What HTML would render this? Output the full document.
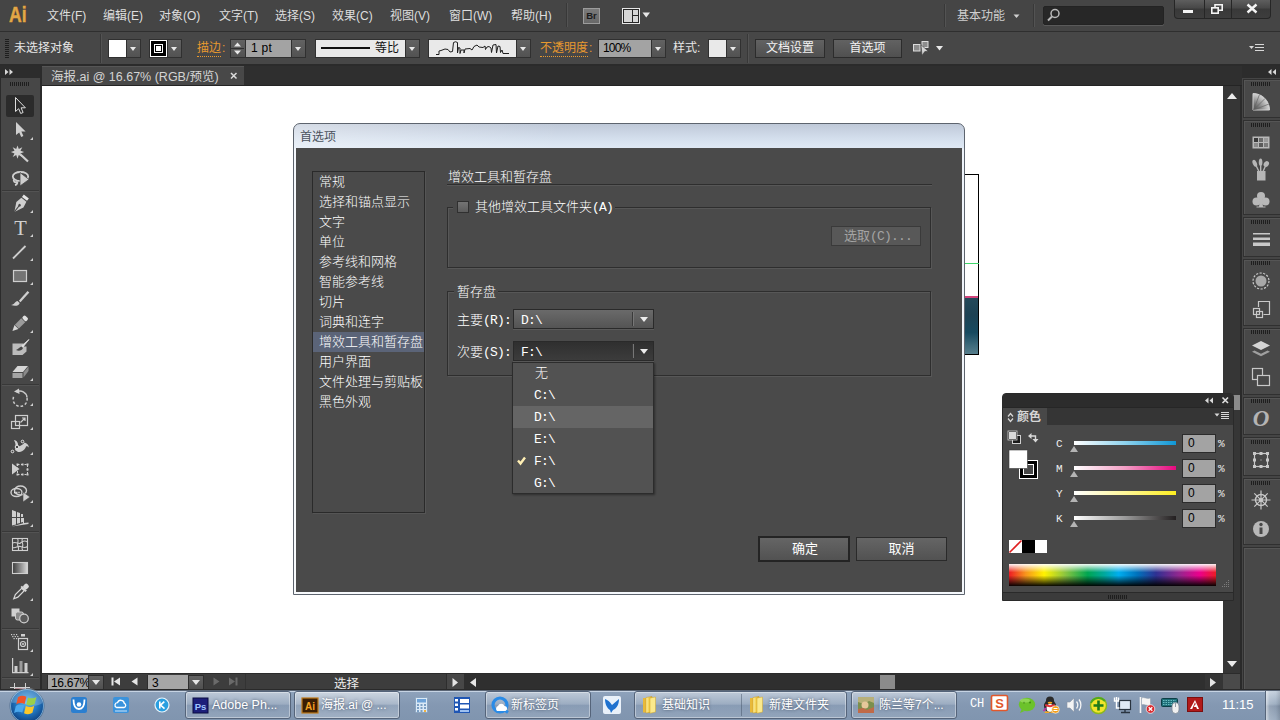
<!DOCTYPE html>
<html lang="zh-CN">
<head>
<meta charset="utf-8">
<title>海报.ai @ 16.67% (RGB/预览)</title>
<style>
*{box-sizing:border-box;margin:0;padding:0}
html,body{width:1280px;height:720px;overflow:hidden;background:#fff}
body{position:relative;font-family:"Liberation Sans","Noto Sans CJK SC",sans-serif;font-size:12px;color:#e4e4e4}
.a{position:absolute}
svg{position:absolute;overflow:visible}
.l{font-family:"Liberation Mono","Noto Sans CJK SC",monospace;font-size:13px;letter-spacing:-0.8px}
/* menubar */
#menubar{left:0;top:0;width:1280px;height:31px;background:#454545}
#menubar .mi{position:absolute;top:8px;font-size:12px;line-height:17px;color:#dedede;white-space:nowrap}
#ailogo{left:8.5px;top:1.5px;font-size:22px;-webkit-text-stroke:.5px #e2a748;font-weight:bold;color:#e2a748;line-height:26px;transform:scaleX(.8);transform-origin:0 0;text-shadow:0 0 1px #3a2a10}
.vsep{position:absolute;width:2px;border-left:1px solid #383838;border-right:1px solid #535353}
/* control bar */
#ctrl{left:0;top:31px;width:1280px;height:35px;background:#474747;border-top:1px solid #2f2f2f;border-bottom:2px solid #2b2b2b}
#ctrl .t{position:absolute;top:9px;font-size:12px;line-height:15px;white-space:nowrap;color:#e6e6e6}
#ctrl .or{color:#e8992f;border-bottom:1px dotted #e8992f}
.dd{position:absolute;top:7px;height:19px;width:15px;background:linear-gradient(#626262,#525252);border:1px solid #303030}
.dd:after{content:"";position:absolute;left:3px;top:7px;border:3.5px solid transparent;border-top:4px solid #e8e8e8;border-bottom:0}
.inp{position:absolute;top:7px;height:19px;background:#a3a3a3;border:1px solid #303030;color:#000;font-size:12px;line-height:16px;padding-left:4px;white-space:nowrap;overflow:hidden}
.btn{position:absolute;top:7px;height:19px;background:linear-gradient(#626262,#505050);border:1px solid #2c2c2c;color:#f2f2f2;font-size:12px;line-height:17px;text-align:center}
/* tabs */
#tabbar{left:41px;top:66px;width:1201px;height:20px;background:#2f2f2f;border-bottom:1px solid #242424}
#tab{left:42px;top:66px;width:202px;height:19px;box-shadow:inset 0 1px 0 #565656;background:#484848;color:#d4d4d4;font-size:12.5px;line-height:23px;padding-left:9px;overflow:hidden;white-space:nowrap}
/* left tools */
#tools{left:0;top:66px;width:42px;height:624px;background:#474747;border-left:1px solid #2b2b2b;border-right:2px solid #2b2b2b}
#toolhead{left:0;top:66px;width:40px;height:12px;background:#2c2c2c}
.tsep{position:absolute;left:2px;width:37px;height:2px;border-top:1px solid #383838;border-bottom:1px solid #535353}
.corner{position:absolute;width:0;height:0;border:2px solid transparent;border-right-color:#d0d0d0;border-bottom-color:#d0d0d0}
/* canvas */
#canvas{left:42px;top:86px;width:1181px;height:587px;background:#fff}
#vscroll{left:1223px;top:86px;width:19px;height:587px;background:#363636;border-right:2px solid #2a2a2a}
#dock{left:1242px;top:66px;width:38px;height:624px;background:#454545}
#dockhead{left:1242px;top:66px;width:38px;height:12px;background:#2c2c2c}
.dg{position:absolute;left:1243px;width:37px;background:#484848;border:1px solid #303030;border-right:0;box-shadow:inset 1px 1px 0 #555}
.grip{position:absolute;height:4px;background:repeating-linear-gradient(90deg,#1e1e1e 0,#1e1e1e 1px,transparent 1px,transparent 2px)}
/* status */
#status{left:42px;top:673px;width:1200px;height:17px;background:#3d3d3d;border-top:1px solid #2b2b2b;border-bottom:1px solid #2b2b2b}
/* taskbar */
#taskbar{left:0;top:690px;width:1280px;height:30px;background:linear-gradient(#5b6676 0,#5b6676 1px,#c6d3e3 1px,#c6d3e3 2px,#8ea2bb 2px,#8498b2 50%,#8095af 100%)}
.tb{position:absolute;top:691px;height:28px;border:1px solid #55647a;border-radius:3px;background:linear-gradient(rgba(255,255,255,.42),rgba(255,255,255,.2) 46%,rgba(255,255,255,.04) 52%,rgba(255,255,255,.14));box-shadow:inset 0 0 0 1px rgba(255,255,255,.38)}
.tt{position:absolute;top:697px;font-size:12px;line-height:16px;color:#fff;white-space:nowrap;text-shadow:0 0 3px rgba(30,40,60,.7)}
/* dialog */
#dlg{left:293px;top:123px;width:672px;height:472px;border:1px solid #5d646e;border-radius:7px 7px 0 0;background:linear-gradient(90deg,rgba(255,255,255,.35),rgba(255,255,255,0) 40%),linear-gradient(#bfc9d8 0,#d3deec 14px,#dee8f4 24px,#eef3fa 25px,#f4f7fb 100%)}
#dlgtitle{left:300px;top:129px;font-size:12px;line-height:16px;color:#4a525c}
#dlgbody{left:296px;top:148px;width:666px;height:444px;background:#4a4a4a}
.d{position:absolute;font-size:13px;line-height:16px;color:#fff;white-space:nowrap;font-family:"Liberation Mono","Noto Sans CJK SC",monospace;font-weight:300}
.gb{position:absolute;border:1px solid #2e2e2e;box-shadow:1px 1px 0 #575757,inset 1px 1px 0 #575757}
.cut{position:absolute;background:#4a4a4a;height:4px}
.sel{position:absolute;height:20px;border:1px solid #2a2a2a;box-shadow:0 1px 0 #5a5a5a}
.sel i{position:absolute;right:19px;top:2px;width:2px;height:14px;border-left:1px solid #3a3a3a;border-right:1px solid #777}
.sel:after{content:"";position:absolute;right:5px;top:7px;border:4px solid transparent;border-top:5px solid #ececec;border-bottom:0}
.dbtn{position:absolute;background:linear-gradient(#656565,#525252);color:#fff;font-size:13px;text-align:center;font-family:"Liberation Mono","Noto Sans CJK SC",monospace}
/* colour panel */
#cp{left:1002px;top:393px;width:232px;height:208px;background:#484848;border:1px solid #2a2a2a;border-radius:4px 4px 0 0}
.cin{position:absolute;left:1182px;width:34px;height:19px;background:#a3a3a3;border:1px solid #2c2c2c;color:#000;font-family:"Liberation Sans",sans-serif;font-size:12px;line-height:16px;padding-left:5px}
.clab{position:absolute;left:1056px;font-size:11px;line-height:12px;color:#eee;font-family:"Liberation Mono",monospace}
.pct{position:absolute;left:1218px;font-size:11px;line-height:12px;color:#eee;font-family:"Liberation Mono",monospace}
.bar{position:absolute;left:1074px;width:102px;height:4px}
.thumb{position:absolute;left:1070px;width:0;height:0;border:4px solid transparent;border-bottom:6px solid #b4b4b4;border-top:0}
</style>
</head>
<body>
<!-- MENUBAR -->
<div id="menubar" class="a">
  <div id="ailogo" class="a">Ai</div>
  <div class="mi" style="left:47px">文件(F)</div>
  <div class="mi" style="left:103px">编辑(E)</div>
  <div class="mi" style="left:159px">对象(O)</div>
  <div class="mi" style="left:219px">文字(T)</div>
  <div class="mi" style="left:275px">选择(S)</div>
  <div class="mi" style="left:332px">效果(C)</div>
  <div class="mi" style="left:390px">视图(V)</div>
  <div class="mi" style="left:449px">窗口(W)</div>
  <div class="mi" style="left:511px">帮助(H)</div>
  <div class="vsep" style="left:566px;top:3px;height:24px"></div>
  <!-- Br button -->
  <div class="a" style="left:583px;top:8px;width:17px;height:16px;border:1px solid #9c9c9c;background:linear-gradient(#7a7a7a,#686868);color:#1c1c1c;font-size:9.5px;font-weight:bold;line-height:14px;text-align:center">Br</div>
  <!-- arrange icon -->
  <svg style="left:622px;top:8px" width="30" height="16" viewBox="0 0 30 16"><rect x="0.5" y="0.5" width="17" height="15" fill="#262626" stroke="#e6e6e6"/><rect x="2" y="2" width="8" height="12" fill="#d6d6d6"/><rect x="11" y="2" width="5" height="5" fill="#d6d6d6"/><rect x="11" y="8" width="5" height="6" fill="#d6d6d6"/><path d="M20.500 4.500h7.500l-3.750 5z" fill="#e6e6e6"/></svg>
  <div class="vsep" style="left:944px;top:4px;height:23px"></div>
  <div class="mi" style="left:957px;color:#cfcfcf">基本功能</div>
  <svg style="left:1013px;top:14px" width="8" height="5"><path d="M0.5 0.5h6l-3 3.5z" fill="#cfcfcf"/></svg>
  <div class="vsep" style="left:1033px;top:4px;height:23px"></div>
  <!-- search -->
  <div class="a" style="left:1043px;top:6px;width:121px;height:19px;background:#272727;border:1px solid #232323;border-radius:2px;box-shadow:0 1px 0 #5a5a5a"></div>
  <svg style="left:1047px;top:8px" width="14" height="14" viewBox="0 0 14 14"><circle cx="8" cy="5.5" r="4" fill="none" stroke="#b9b9b9" stroke-width="1.5"/><path d="M5 8.5L1 12.5" stroke="#b9b9b9" stroke-width="2"/></svg>
  <!-- window controls -->
  <div class="a" style="left:1174px;top:0;width:97px;height:19px;border:1px solid #262626;border-top:0;border-radius:0 0 4px 4px;background:linear-gradient(#5e5e5e,#474747 45%,#393939 50%,#3d3d3d)"></div>
  <div class="a" style="left:1204px;top:0;width:1px;height:18px;background:#262626"></div>
  <div class="a" style="left:1231px;top:0;width:1px;height:18px;background:#262626"></div>
  <svg style="left:1174px;top:0" width="95" height="19" viewBox="0 0 95 19"><rect x="9" y="10" width="10" height="3" fill="#f4f4f4"/><g fill="none" stroke="#f4f4f4" stroke-width="1.6"><rect x="37.8" y="7.8" width="6.4" height="5.4"/><path d="M41 7V4.8h7.2v5.4H45"/></g><path d="M73.5 4.5l9 8M82.5 4.5l-9 8" stroke="#f4f4f4" stroke-width="2.4"/></svg>
</div>
<!-- CONTROL BAR -->
<div id="ctrl" class="a">
  <div class="grip a" style="left:5px;top:7px;width:4px;height:20px;background:repeating-linear-gradient(180deg,#1e1e1e 0,#1e1e1e 1px,transparent 1px,transparent 2px)"></div>
  <div class="t" style="left:14px">未选择对象</div>
  <div class="vsep" style="left:100px;top:2px;height:29px"></div>
  <div class="a" style="left:108px;top:7px;width:19px;height:19px;background:#fff;border:1px solid #303030"></div>
  <div class="dd" style="left:126px"></div>
  <div class="a" style="left:149px;top:7px;width:19px;height:19px;background:#000;border:1px solid #303030;box-shadow:inset 0 0 0 1px #fff"></div>
  <div class="a" style="left:154px;top:12px;width:9px;height:9px;background:#fff;border:1px solid #fff;box-shadow:inset 0 0 0 1px #000"></div>
  <div class="dd" style="left:167px"></div>
  <div class="t or" style="left:197px">描边</div><div class="t" style="left:222px;color:#e8992f">:</div>
  <!-- spinner -->
  <div class="a" style="left:230px;top:7px;width:16px;height:19px;background:linear-gradient(#626262,#525252);border:1px solid #303030"></div>
  <svg style="left:230px;top:7px" width="16" height="19"><path d="M4 7.5h7l-3.5-4zM4 11.5h7l-3.5 4z" fill="#e8e8e8"/><path d="M1 9.5h13" stroke="#303030"/></svg>
  <div class="inp" style="left:245px;width:47px;font-family:'Liberation Sans',sans-serif;font-size:12px;letter-spacing:0.3px;padding-left:5px">1 pt</div>
  <div class="dd" style="left:291px"></div>
  <div class="a" style="left:315px;top:7px;width:91px;height:19px;background:#e9e9e9;border:1px solid #303030"></div>
  <div class="a" style="left:321px;top:15px;width:49px;height:2px;background:#111"></div>
  <div class="a" style="left:375px;top:8px;font-size:12px;line-height:16px;color:#111">等比</div>
  <div class="dd" style="left:405px"></div>
  <div class="a" style="left:428px;top:7px;width:89px;height:19px;background:#e9e9e9;border:1px solid #303030"></div>
  <svg style="left:429px;top:7px" width="88" height="19" viewBox="0 0 88 19"><path d="M7 15.500h3v-3.500l2-.500 4-1.500 3 .500 2 2.500 2.500-.500 1-9q2-1.500 4 0v10.500l1-5.500 1.500.500v5.500l1-3.500h3v3l1-4 5-.500 2 1.500 2-3.500 3-1.500 2 2 4 .500 2-1.500.500 3.500 1.500-2.500 2-.500 2 1.500.500 4.500 1.500-7.500 3-.500.500 8.500 1.500-7 2 .500.500 6 1.500-2.500 1 3.500h6" fill="none" stroke="#1e1e1e" stroke-width="1"/></svg>
  <div class="dd" style="left:516px"></div>
  <div class="t or" style="left:540px">不透明度</div><div class="t" style="left:589px;color:#e8992f">:</div>
  <div class="inp" style="left:598px;width:54px;font-family:'Liberation Sans',sans-serif;font-size:12px;letter-spacing:-0.8px">100%</div>
  <div class="dd" style="left:651px"></div>
  <div class="t" style="left:673px">样式:</div>
  <div class="a" style="left:708px;top:7px;width:19px;height:19px;background:#e9e9e9;border:1px solid #303030"></div>
  <div class="dd" style="left:726px"></div>
  <div class="vsep" style="left:747px;top:2px;height:29px"></div>
  <div class="btn" style="left:755px;width:70px">文档设置</div>
  <div class="btn" style="left:833px;width:69px">首选项</div>
  <svg style="left:912px;top:8px" width="32" height="17" viewBox="0 0 32 17"><rect x="1.500" y="4.500" width="6.500" height="6.500" fill="#8c8c8c" stroke="#dcdcdc"/><rect x="10" y="1.500" width="6" height="6" fill="#8c8c8c" stroke="#dcdcdc"/><path d="M9 4.800l7.200 6.400-3.400.4-2.800 3.800z" fill="#d4d4d4" stroke="#3a3a3a" stroke-width=".6"/><path d="M24 6h7l-3.500 4.500z" fill="#e8e8e8"/></svg>
  <svg style="left:1249px;top:11px" width="16" height="11" viewBox="0 0 16 11"><path d="M0 3h5l-2.5 3z" fill="#d8d8d8"/><path d="M6 1.5h9M6 4.5h9M6 7.5h9" stroke="#d8d8d8"/></svg>
</div>
<!-- TABS -->
<div id="tabbar" class="a"></div>
<div id="tab" class="a">海报.ai @ 16.67% (RGB/预览)</div>
<svg style="left:230px;top:72px" width="8" height="8"><path d="M1 1l5.5 5.5M6.5 1L1 6.5" stroke="#dcdcdc" stroke-width="1.5"/></svg>
<!-- TOOLS -->
<div id="tools" class="a"></div>
<div id="toolhead" class="a"></div>
<svg style="left:5px;top:69px" width="9" height="6"><path d="M0 0l3.500 3L0 6zM4.500 0L8 3 4.500 6z" fill="#d8d8d8"/></svg>
<div class="grip" style="left:10px;top:82px;width:20px"></div>
<div class="a" style="left:6px;top:95px;width:28px;height:22px;background:#2b2b2b;border-radius:2px"></div>
<div class="tsep" style="top:190px"></div>
<div class="tsep" style="top:384px"></div>
<div class="tsep" style="top:531px"></div>
<div class="tsep" style="top:628px"></div>
<div class="tsep" style="top:677px"></div>
<svg style="left:0;top:66px" width="41" height="624" viewBox="0 66 41 624">
<g fill="#cfcfcf" stroke="none">
<!-- corner marks -->
<path d="M33 137v3h-3zM33 210v3h-3zM33 234v3h-3zM33 258v3h-3zM33 282v3h-3zM33 330v3h-3zM33 378v3h-3zM33 403v3h-3zM33 427v3h-3zM33 452v3h-3zM33 500v3h-3zM33 524v3h-3zM33 598v3h-3zM33 649v3h-3zM33 673v3h-3z"/>
</g>
<!-- 1 selection (outlined arrow) -->
<path d="M15.500 97.500v14l3.200-2.800 2 4.800 2.400-1-2-4.700h4.300z" fill="#2b2b2b" stroke="#dedede" stroke-width="1" stroke-linejoin="round"/>
<!-- 2 direct selection -->
<path d="M16 122v13l3.200-2.600 2 4.600 2.200-1-2-4.500h4.200z" fill="#cfcfcf"/>
<!-- 3 magic wand -->
<path d="M17.500 145.500l1.300 3.600 3.500-1.800-1.800 3.500 3.600 1.300-3.600 1.300 1.800 3.500-3.500-1.800-1.300 3.600-1.300-3.600-3.500 1.800 1.800-3.500-3.600-1.300 3.600-1.300-1.800-3.500 3.500 1.800z" fill="#cfcfcf"/><path d="M20.500 154.500l7.500 7" stroke="#cfcfcf" stroke-width="2.200"/>
<!-- 4 lasso -->
<g fill="none" stroke="#cfcfcf" stroke-width="1.800"><ellipse cx="20.500" cy="176.500" rx="7.700" ry="4.500"/><path d="M14 179.500c-1 2 1 3 2.500 2.500s1 2.500-1.500 3"/></g><path d="M20 172.500v13.500l9-6.500z" fill="#cfcfcf" stroke="#474747" stroke-width=".8"/>
<!-- 5 pen -->
<g transform="translate(20.500 204) rotate(38)"><path d="M-3.200-9.500h6.400v3h-6.400z" fill="#e4e4e4"/><path d="M-3.200-5.500h6.400l1.300 6.500-4.500 9-4.500-9z" fill="#cfcfcf"/><path d="M0 10V2" stroke="#474747" stroke-width="1"/><circle cx="0" cy="1.500" r="1.300" fill="#474747"/></g>
<!-- 6 type -->
<text x="20.500" y="234.500" font-family="Liberation Serif,serif" font-size="20.500" text-anchor="middle" fill="#cfcfcf">T</text>
<!-- 7 line -->
<path d="M13 258.500l12.500-12.500" stroke="#cfcfcf" stroke-width="1.800"/>
<!-- 8 rect -->
<rect x="13.500" y="270.500" width="13" height="11" fill="#747474" stroke="#cfcfcf" stroke-width="1.200"/>
<!-- 9 brush -->
<path d="M27.500 291l1.800 1.600-8.800 9.600-1.600-1.500z" fill="#cfcfcf"/><path d="M11 305c3.500-.5 4-3.500 6.500-4l2.200 2c-.8 3-5 3.500-8.700 2z" fill="#cfcfcf"/>
<!-- 10 pencil -->
<g transform="translate(19.500 324) rotate(45)"><rect x="-2.800" y="-10" width="5.600" height="4" rx="1.500" fill="#e0e0e0"/><rect x="-2.800" y="-5.300" width="5.600" height="9" fill="#9a9a9a"/><path d="M-2.800 4.300h5.600L0 10z" fill="#d8d8d8"/></g>
<!-- 11 blob brush -->
<path d="M12.500 343.500h11v3l3 0v5l-4 3.500h-10z" fill="#bcbcbc"/><path d="M16 350c2-.5 3.500-3 5.500-3.500l1.500 1.500c-1 2.500-4 3.500-7 2z" fill="#474747"/><path d="M29 339.500l-6 7.500-1.300-1.200z" fill="#e0e0e0" stroke="#e0e0e0" stroke-width=".8"/>
<!-- 12 eraser -->
<path d="M17.500 366h10.500l-5 6h-10.500z" fill="#d6d6d6"/><path d="M12.500 373h10v5h-10z" fill="#a4a4a4"/><path d="M23.500 372.500l5-6v4.500l-5 6.500z" fill="#8a8a8a"/>
<!-- 13 rotate -->
<g fill="none" stroke="#c8c8c8" stroke-width="1.500"><path d="M16.500 392a7 7 0 0 1 10.500 5.500"/><path d="M27 398a7 7 0 1 1-13-2" stroke-dasharray="2.600 2"/></g><path d="M19 388.500l-5 3 5.500 2.500z" fill="#cfcfcf"/>
<!-- 14 scale -->
<g fill="none" stroke="#cfcfcf" stroke-width="1.200"><rect x="11.500" y="421.500" width="8" height="7"/><rect x="15.500" y="415.500" width="12" height="10"/><path d="M20.500 422.500l4.500-4.500M22 418h3v3"/></g>
<!-- 15 warp/width -->
<g fill="#cfcfcf"><path d="M14 440c3 .5 4.500 3 4 6.500 3-.5 5-2 6.500-4 2.500.5 4 2.500 4.500 5-1-1-2-1.500-3-1-1 3.500-4 5.500-8 5.500l-3-2c1-3 1-6-1-10z"/></g><g fill="#474747" stroke="#e8e8e8" stroke-width="1"><circle cx="17" cy="447" r="1.800"/><circle cx="12.500" cy="451.500" r="1.300"/><circle cx="22.500" cy="441.500" r="1.300"/></g>
<!-- 16 free transform -->
<path d="M12 463.500v11l7.500-5.500z" fill="#cfcfcf"/><g fill="none" stroke="#cfcfcf" stroke-width="1" stroke-dasharray="2 1.500"><rect x="17.500" y="464.500" width="10" height="10"/></g><g fill="#cfcfcf"><rect x="16.500" y="463.500" width="2" height="2"/><rect x="26.500" y="463.500" width="2" height="2"/><rect x="26.500" y="473.500" width="2" height="2"/><rect x="16.500" y="473.500" width="2" height="2"/><rect x="21.500" y="463.500" width="2" height="2"/><rect x="21.500" y="473.500" width="2" height="2"/><rect x="26.500" y="468.500" width="2" height="2"/></g>
<!-- 17 shape builder -->
<g fill="none" stroke="#cfcfcf" stroke-width="1.400"><ellipse cx="16.500" cy="492.500" rx="5.500" ry="4"/><ellipse cx="20.500" cy="490.500" rx="6" ry="4.500"/></g><path d="M14 492.500h6" stroke="#e8e8e8" stroke-width="1.400" stroke-dasharray="1.200 1"/><path d="M23 492v10l7-5z" fill="#cfcfcf" stroke="#474747" stroke-width=".6"/>
<!-- 18 perspective grid -->
<g fill="#cfcfcf"><path d="M12 510l4 1.500v5.500h-4zM12 518h4v6.500l-4 1zM17 512l3 1v4h-3zM17 518h3v5l-3 .7zM21 514h2v3h-2zM21 518h2v4l-2 .5z"/><path d="M12 526.500l16.500-2.500v-1.500l-4.500.5v-5h-1v5.200z" /></g>
<!-- 19 mesh -->
<g fill="none" stroke="#cfcfcf" stroke-width="1.100"><rect x="12.500" y="538.500" width="15" height="12"/><path d="M12.500 543c4-2 6 2 8 0s4-3 7-1M12.500 547.500c3 1.500 5-2 8-1s5 2 7 0M17.500 538.500c2 3-1 5 .5 7.500s0 3 .5 4.500M22.500 538.500c-2 3 1.500 5 0 8s.5 3 0 4"/></g>
<!-- 20 gradient -->
<defs><linearGradient id="tg" x1="0" x2="1"><stop offset="0" stop-color="#3a3a3a"/><stop offset="1" stop-color="#d8d8d8"/></linearGradient></defs>
<rect x="12.500" y="562.500" width="15" height="11" fill="url(#tg)" stroke="#cfcfcf" stroke-width="1.100"/>
<!-- 21 eyedropper -->
<g transform="translate(20.500 592) rotate(45)"><rect x="-2.500" y="-10.500" width="5" height="5.500" rx="2" fill="#d8d8d8"/><rect x="-3.500" y="-5.500" width="7" height="2" fill="#d8d8d8"/><path d="M-1.800-3.500h3.600v9L0 9.500l-1.800-4z" fill="none" stroke="#d8d8d8" stroke-width="1.200"/></g>
<!-- 22 blend -->
<rect x="11.500" y="608.500" width="8" height="8" fill="#d0d0d0"/><rect x="15.500" y="612" width="8" height="8" rx="2" fill="#8a8a8a" stroke="#d0d0d0" stroke-width="1"/><circle cx="24" cy="618.500" r="4.300" fill="#5a5a5a" stroke="#d0d0d0" stroke-width="1.200"/>
<!-- 23 symbol sprayer -->
<g fill="none" stroke="#cfcfcf" stroke-width="1.200"><rect x="18.500" y="638.500" width="9" height="11"/><circle cx="23" cy="644" r="2.500"/></g><circle cx="23" cy="644" r="1" fill="#cfcfcf"/><rect x="21" y="634" width="4" height="2.500" fill="#cfcfcf"/><g fill="#cfcfcf"><rect x="11" y="634" width="1.200" height="1.200"/><rect x="13.500" y="634" width="1.200" height="1.200"/><rect x="16" y="634" width="1.200" height="1.200"/><rect x="12.200" y="636" width="1.200" height="1.200"/><rect x="14.700" y="636" width="1.200" height="1.200"/><rect x="17.200" y="636" width="1.200" height="1.200"/><rect x="13.500" y="638" width="1.200" height="1.200"/><rect x="16" y="638" width="1.200" height="1.200"/></g>
<!-- 24 graph -->
<g fill="#cfcfcf"><path d="M12 658h1.200v14h15.300v1.200H12z"/><rect x="14.500" y="666" width="3" height="6"/><rect x="19.500" y="661" width="3" height="11" fill="#9c9c9c"/><rect x="24.500" y="663" width="3" height="9"/></g>
<!-- 25 artboard (clipped) -->
<g stroke="#cfcfcf" stroke-width="1" fill="none"><path d="M10 687.500h20M14.500 683v7M25.500 683v7"/></g><rect x="15" y="688" width="10" height="2" fill="#b08890"/>
</svg>
<!-- CANVAS -->
<div id="canvas" class="a"></div>
<!-- artboard behind dialog -->
<div class="a" style="left:900px;top:174px;width:79px;height:181px;border:1px solid #000;background:#fff"></div>
<div class="a" style="left:901px;top:296px;width:77px;height:2px;background:#d2457c"></div>
<div class="a" style="left:901px;top:298px;width:77px;height:56px;background:linear-gradient(#24495a 0,#1d4254 30%,#174a60 62%,#3f6b7c 85%,#567e8c 100%)"></div>
<div class="a" style="left:960px;top:263px;width:19px;height:1px;background:#3fd66a"></div>
<!-- vertical scrollbar -->
<div id="vscroll" class="a"></div>
<svg style="left:1223px;top:86px" width="18" height="587" viewBox="0 0 18 587"><path d="M4 13h10l-5-6z" fill="#ededed"/><path d="M4 575h10l-5 6z" fill="#ededed"/><rect x="3" y="309" width="14" height="15" fill="#8b8b8b"/></svg>
<!-- STATUS BAR -->
<div id="status" class="a"></div>
<div class="a" style="left:47px;top:675px;width:42px;height:15px;background:#a6a6a6;border:1px solid #2e2e2e;border-top:0;color:#000;font-family:'Liberation Sans',sans-serif;font-size:12px;line-height:16px;padding-left:3px;white-space:nowrap;overflow:hidden;letter-spacing:-0.3px">16.67%</div>
<div class="a" style="left:88px;top:675px;width:16px;height:15px;background:linear-gradient(#626262,#505050);border:1px solid #2e2e2e"></div>
<div class="a" style="left:147px;top:675px;width:42px;height:15px;background:#a6a6a6;border:1px solid #2e2e2e;border-top:0;color:#000;font-family:'Liberation Sans',sans-serif;font-size:12px;line-height:16px;padding-left:4px;overflow:hidden">3</div>
<div class="a" style="left:188px;top:675px;width:16px;height:15px;background:linear-gradient(#626262,#505050);border:1px solid #2e2e2e"></div>
<svg style="left:42px;top:674px" width="1200" height="16" viewBox="0 0 1200 16"><g fill="#e6e6e6"><path d="M50 6h8l-4 5zM150 6h8l-4 5z"/><path d="M69.500 3.500h2v8h-2zM78 3.500v8l-6-4zM95.500 3.500v8l-6-4z"/></g><g fill="#6a6a6a"><path d="M171.500 3.500v8l6-4zM187 3.500v8l6-4zM193.500 3.500h2v8h-2z"/></g><path d="M203.500 0v16" stroke="#333"/><rect x="422" y="0" width="759" height="16" fill="#2f2f2f"/><rect x="404" y="0" width="18" height="16" fill="#474747"/><path d="M404.500 0v16" stroke="#2e2e2e"/><path d="M410.500 4v9l5.500-4.500z" fill="#e6e6e6"/><path d="M434 4v9l-6-4.500z" fill="#e6e6e6"/><rect x="838" y="1" width="15" height="14" fill="#8b8b8b"/><rect x="1163" y="0" width="18" height="16" fill="#353535"/><rect x="1181" y="0" width="17" height="16" fill="#4a4a4a"/><path d="M1168 4v9l6-4.500z" fill="#e6e6e6"/></svg>
<div class="a" style="left:334px;top:677px;font-size:12.5px;line-height:15px;color:#eaeaea">选择</div>
<!-- DOCK -->
<div id="dock" class="a"></div>
<div id="dockhead" class="a"></div>
<svg style="left:1268px;top:69px" width="9" height="6"><path d="M3.500 0L0 3l3.500 3zM8 0L4.500 3 8 6z" fill="#d8d8d8"/></svg>
<div class="dg" style="top:79px;height:39px"></div>
<div class="dg" style="top:120px;height:95px"></div>
<div class="dg" style="top:217px;height:40px"></div>
<div class="dg" style="top:259px;height:67px"></div>
<div class="dg" style="top:328px;height:67px"></div>
<div class="dg" style="top:397px;height:38px"></div>
<div class="dg" style="top:437px;height:39px"></div>
<div class="dg" style="top:478px;height:67px"></div>
<div class="dg" style="top:547px;height:143px"></div>
<div class="grip" style="left:1251px;top:82px;width:20px"></div>
<div class="grip" style="left:1251px;top:123px;width:20px"></div>
<div class="grip" style="left:1251px;top:220px;width:20px"></div>
<div class="grip" style="left:1251px;top:261px;width:20px"></div>
<div class="grip" style="left:1251px;top:330px;width:20px"></div>
<div class="grip" style="left:1251px;top:399px;width:20px"></div>
<div class="grip" style="left:1251px;top:440px;width:20px"></div>
<div class="grip" style="left:1251px;top:481px;width:20px"></div>
<svg style="left:1242px;top:66px" width="38" height="624" viewBox="1242 66 38 624">
<defs><radialGradient id="cg" cx="0" cy="1" r="1"><stop offset="0" stop-color="#444"/><stop offset=".5" stop-color="#888"/><stop offset="1" stop-color="#d4d4d4"/></radialGradient></defs>
<!-- colour guide -->
<path d="M1253 93.500c9 0 16.500 7 16.500 16.500h-16.500z" fill="url(#cg)" stroke="#d0d0d0" stroke-width="1"/>
<path d="M1253.500 110l6-15.500M1253.500 110l11.500-11.500M1253.500 110l15.500-6" stroke="#666" stroke-width=".7"/>
<!-- swatches -->
<rect x="1252.500" y="136.500" width="17" height="12" fill="#b8b8b8"/>
<g><rect x="1254" y="138" width="4" height="4" fill="#3a3a3a"/><rect x="1259" y="138" width="4" height="4" fill="#6c6c6c"/><rect x="1264" y="138" width="4" height="4" fill="#9a9a9a"/><rect x="1254" y="143" width="4" height="4" fill="#8a8a8a"/><rect x="1259" y="143" width="4" height="4" fill="#5a5a5a"/><rect x="1264" y="143" width="4" height="4" fill="#7a7a7a"/></g>
<!-- brushes -->
<g fill="#b6b6b6" stroke="none"><rect x="1257" y="171" width="8.500" height="9.500"/><ellipse cx="1254.800" cy="163.300" rx="2" ry="3.600" transform="rotate(-25 1254.800 163.300)"/><ellipse cx="1260.600" cy="162.300" rx="1.800" ry="3.800"/><ellipse cx="1266.300" cy="164" rx="2.400" ry="3.200" transform="rotate(35 1266.300 164)"/></g><g stroke="#b6b6b6" stroke-width="1.400" fill="none"><path d="M1259 171.500l-3-6M1260.700 171.500v-6M1263 171.500l2.500-5.500"/></g>
<!-- symbols (club) -->
<g fill="#b8b8b8"><circle cx="1261" cy="196" r="4"/><circle cx="1256.500" cy="201.500" r="4"/><circle cx="1265.500" cy="201.500" r="4"/><path d="M1260 199h2l1 7.500h2.500v1h-9v-1h2.500z"/></g>
<!-- stroke -->
<g fill="#c8c8c8"><rect x="1253" y="233" width="17" height="1.500"/><rect x="1253" y="237.500" width="17" height="2.500"/><rect x="1253" y="242.500" width="17" height="3.500"/></g>
<!-- gradient -->
<circle cx="1261" cy="281" r="5.500" fill="#a8a8a8"/><circle cx="1261" cy="281" r="8" fill="none" stroke="#c8c8c8" stroke-width="1.200" stroke-dasharray="2.200 1.400"/>
<!-- transparency -->
<g fill="none" stroke="#c8c8c8" stroke-width="1.200"><path d="M1258.500 307v-5.500h11v13h-6"/><rect x="1253.500" y="308.500" width="6" height="6"/><rect x="1256.500" y="311.500" width="6" height="6"/></g>
<!-- layers -->
<path d="M1261 341l9 4.500-9 4.500-9-4.500z" fill="#d4d4d4"/><path d="M1254.500 350.500l-2.500 1.200 9 4.500 9-4.500-2.500-1.200-6.500 3.200z" fill="#a0a0a0"/>
<!-- artboards -->
<g fill="#484848" stroke="#c8c8c8" stroke-width="1.200"><rect x="1252.500" y="368.500" width="10" height="11"/><rect x="1257.500" y="375.500" width="12" height="10"/></g>
<!-- O -->
<text x="1261" y="426" font-family="Liberation Serif,serif" font-style="italic" font-weight="bold" font-size="23" text-anchor="middle" fill="#b4b4b4">O</text>
<!-- transform -->
<g fill="none" stroke="#c8c8c8" stroke-width="1.200"><rect x="1254.500" y="453.500" width="13" height="13"/></g><g fill="#c8c8c8"><rect x="1253" y="452" width="3" height="3"/><rect x="1259.500" y="452" width="3" height="3"/><rect x="1266" y="452" width="3" height="3"/><rect x="1253" y="458.500" width="3" height="3"/><rect x="1266" y="458.500" width="3" height="3"/><rect x="1253" y="465" width="3" height="3"/><rect x="1259.500" y="465" width="3" height="3"/><rect x="1266" y="465" width="3" height="3"/><rect x="1260.500" y="459.500" width="1" height="1"/></g>
<!-- wheel -->
<g fill="none" stroke="#c8c8c8"><circle cx="1261" cy="500" r="5.500" stroke-width="1.400"/><path d="M1261 490.500v19M1251.500 500h19M1254.300 493.300l13.400 13.400M1267.700 493.300l-13.400 13.400" stroke-width="1.200"/></g><circle cx="1261" cy="500" r="2" fill="#c8c8c8"/>
<!-- info -->
<circle cx="1261" cy="529" r="8" fill="#b8b8b8"/><rect x="1259.500" y="527.500" width="3" height="6.500" fill="#484848"/><circle cx="1261" cy="524.500" r="1.700" fill="#484848"/>
</svg>
<!-- DIALOG -->
<div id="dlg" class="a"></div>
<div id="dlgtitle" class="a">首选项</div>
<div id="dlgbody" class="a"></div>
<!-- category list -->
<div class="a" style="left:312px;top:171px;width:113px;height:342px;border:1px solid #2a2a2a;box-shadow:1px 1px 0 #555"></div>
<div class="a" style="left:313px;top:332px;width:111px;height:20px;background:#5b6478"></div>
<div class="d" style="left:319px;top:175px">常规</div>
<div class="d" style="left:319px;top:195px">选择和锚点显示</div>
<div class="d" style="left:319px;top:215px">文字</div>
<div class="d" style="left:319px;top:235px">单位</div>
<div class="d" style="left:319px;top:255px">参考线和网格</div>
<div class="d" style="left:319px;top:275px">智能参考线</div>
<div class="d" style="left:319px;top:295px">切片</div>
<div class="d" style="left:319px;top:315px">词典和连字</div>
<div class="d" style="left:319px;top:335px">增效工具和暂存盘</div>
<div class="d" style="left:319px;top:355px">用户界面</div>
<div class="d" style="left:319px;top:375px">文件处理与剪贴板</div>
<div class="d" style="left:319px;top:395px">黑色外观</div>
<!-- heading -->
<div class="d" style="left:448px;top:170px">增效工具和暂存盘</div>
<div class="a" style="left:447px;top:184px;width:485px;height:2px;border-top:1px solid #2e2e2e;border-bottom:1px solid #575757"></div>
<!-- group 1 -->
<div class="gb" style="left:447px;top:207px;width:484px;height:61px"></div>
<div class="cut" style="left:453px;top:206px;width:162px"></div>
<div class="a" style="left:457px;top:201px;width:12px;height:12px;border:1px solid #303030;background:linear-gradient(#747474,#5c5c5c)"></div>
<div class="d" style="left:475px;top:200px">其他增效工具文件夹<span class="l">(A)</span></div>
<div class="dbtn" style="left:831px;top:226px;width:90px;height:20px;border:1px solid #3a3a3a;background:#585858;color:#a4a4a4;line-height:19px;padding-left:4px">选取<span class="l">(C)...</span></div>
<!-- group 2 -->
<div class="gb" style="left:447px;top:291px;width:484px;height:85px"></div>
<div class="cut" style="left:454px;top:290px;width:44px"></div>
<div class="d" style="left:457px;top:285px">暂存盘</div>
<div class="d" style="left:457px;top:313px">主要<span class="l">(R):</span></div>
<div class="sel" style="left:513px;top:309px;width:141px;background:linear-gradient(#6a6a6a,#545454)"><i></i></div>
<div class="d l" style="left:521px;top:313px">D:\</div>
<div class="d" style="left:457px;top:345px">次要<span class="l">(S):</span></div>
<div class="sel" style="left:513px;top:341px;width:141px;background:linear-gradient(#2f2f2f,#3c3c3c)"><i></i></div>
<div class="d l" style="left:521px;top:345px">F:\</div>
<!-- popup -->
<div class="a" style="left:512px;top:362px;width:142px;height:132px;background:#525252;border:1px solid #2c2c2c;box-shadow:1px 1px 2px rgba(0,0,0,.4)"></div>
<div class="a" style="left:513px;top:406px;width:140px;height:22px;background:#656565"></div>
<div class="d" style="left:535px;top:366px">无</div>
<div class="d l" style="left:534px;top:388px">C:\</div>
<div class="d l" style="left:534px;top:410px">D:\</div>
<div class="d l" style="left:534px;top:432px">E:\</div>
<div class="d l" style="left:534px;top:454px">F:\</div>
<div class="d l" style="left:534px;top:476px">G:\</div>
<svg style="left:517px;top:456px" width="10" height="9"><path d="M1 4.500l2.500 3L8 1.500" fill="none" stroke="#ffefb4" stroke-width="2.4"/></svg>
<!-- buttons -->
<div class="dbtn" style="left:758px;top:536px;width:92px;height:26px;border:2px solid #242424;line-height:23px;padding-left:2px">确定</div>
<div class="dbtn" style="left:856px;top:537px;width:91px;height:24px;border:1px solid #2a2a2a;line-height:23px">取消</div>
<!-- COLOUR PANEL -->
<div id="cp" class="a"></div>
<div class="a" style="left:1003px;top:394px;width:230px;height:13px;background:#2c2c2c;border-radius:3px 3px 0 0"></div>
<div class="a" style="left:1003px;top:407px;width:230px;height:18px;background:#353535;border-top:1px solid #262626"></div>
<div class="a" style="left:1003px;top:408px;width:44px;height:17px;background:#484848"></div>
<svg style="left:1003px;top:394px" width="230" height="207" viewBox="1003 394 230 207">
<path d="M1208.500 397.500v6l-3.500-3zM1213 397.500v6l-3.500-3z" fill="#d8d8d8"/><path d="M1222.500 397.500l5.500 5.500M1228 397.500l-5.500 5.500" stroke="#e0e0e0" stroke-width="1.600"/>
<path d="M1214.500 413.500h5l-2.500 3z" fill="#d8d8d8"/><path d="M1221 412.500h8M1221 414.500h8M1221 416.500h8M1221 418.500h8" stroke="#d8d8d8"/>
<path d="M1008 416.500l2.500-3 2.500 3M1008 418.500l2.500 3 2.500-3" fill="none" stroke="#d8d8d8" stroke-width="1.200"/>
<!-- default fill/stroke + swap -->
<rect x="1012.500" y="435.500" width="8" height="8" fill="#1a1a1a" stroke="#d0d0d0"/><rect x="1008.500" y="431.500" width="8" height="8" fill="#d8d8d8" stroke="#2a2a2a"/><rect x="1008" y="431" width="9" height="9" fill="none" stroke="#d0d0d0" stroke-width=".8"/>
<path d="M1030 436h5.500v5" fill="none" stroke="#d8d8d8" stroke-width="1.400"/><path d="M1028 436l3.500-3v6zM1035.500 442.500l-3-3.500h6z" fill="#d8d8d8"/>
<!-- stroke swatch -->
<rect x="1019.500" y="460.500" width="18" height="18" fill="#000" stroke="#fff"/><rect x="1023.500" y="464.500" width="10" height="10" fill="#484848" stroke="#fff"/>
<rect x="1009" y="450" width="18.500" height="18.500" fill="#fff" stroke="#3a3a3a" stroke-width=".6"/>
<!-- none / black / white -->
<rect x="1009" y="540" width="13" height="13" fill="#fff"/><path d="M1009.500 552.500l12-12" stroke="#e02020" stroke-width="1.600"/><rect x="1022" y="540" width="13" height="13" fill="#000"/><rect x="1035" y="540" width="12" height="13" fill="#fff"/>
<!-- resize corner -->
<g fill="#7c7c7c"><rect x="1228" y="580" width="1" height="1"/><rect x="1226" y="582" width="1" height="1"/><rect x="1228" y="582" width="1" height="1"/><rect x="1224" y="584" width="1" height="1"/><rect x="1226" y="584" width="1" height="1"/><rect x="1228" y="584" width="1" height="1"/><rect x="1222" y="586" width="1" height="1"/><rect x="1224" y="586" width="1" height="1"/><rect x="1226" y="586" width="1" height="1"/><rect x="1228" y="586" width="1" height="1"/></g>
</svg>
<div class="a" style="left:1017px;top:410px;font-size:12px;line-height:15px;color:#d6d6d6;font-weight:bold">颜色</div>
<div class="clab" style="top:438px">C</div><div class="clab" style="top:463px">M</div><div class="clab" style="top:488px">Y</div><div class="clab" style="top:513px">K</div>
<div class="bar" style="top:441px;background:linear-gradient(90deg,#fff,#8fd3ee 50%,#0f97d6)"></div>
<div class="bar" style="top:466px;background:linear-gradient(90deg,#fff,#f29fc5 50%,#e5097f)"></div>
<div class="bar" style="top:491px;background:linear-gradient(90deg,#fff,#fff799 50%,#fdee21)"></div>
<div class="bar" style="top:516px;background:linear-gradient(90deg,#fff,#9a9a9a 50%,#231f20)"></div>
<div class="thumb" style="top:446px"></div><div class="thumb" style="top:471px"></div><div class="thumb" style="top:496px"></div><div class="thumb" style="top:521px"></div>
<div class="cin" style="top:434px">0</div><div class="cin" style="top:459px">0</div><div class="cin" style="top:484px">0</div><div class="cin" style="top:509px">0</div>
<div class="pct" style="top:438px">%</div><div class="pct" style="top:463px">%</div><div class="pct" style="top:488px">%</div><div class="pct" style="top:513px">%</div>
<!-- spectrum -->
<div class="a" style="left:1009px;top:564px;width:207px;height:22px;background:linear-gradient(rgba(255,255,255,.95) 0,rgba(255,255,255,0) 38%,rgba(0,0,0,0) 52%,rgba(0,0,0,.97) 100%),linear-gradient(90deg,#ed1c24 0,#f7941d 8%,#fff200 17%,#8dc63f 27%,#00a651 38%,#00a99d 46%,#00aeef 53%,#0072bc 62%,#2e3192 71%,#92278f 82%,#ec008c 92%,#ed1c24 100%)"></div>
<div class="a" style="left:1003px;top:592px;width:230px;height:8px;background:#3b3b3b;border-top:1px solid #2a2a2a"></div>
<div class="grip" style="left:1108px;top:595px;width:20px"></div>
<!-- TASKBAR -->
<div class="a" style="left:1240px;top:673px;width:2px;height:17px;background:#2a2a2a"></div>
<div class="a" style="left:0;top:689px;width:1280px;height:1px;background:#2a2a2a"></div>
<div id="taskbar" class="a"></div>
<div class="tb" style="left:185px;width:106px"></div>
<div class="tb" style="left:294px;width:106px;background:linear-gradient(rgba(255,255,255,.55),rgba(255,255,255,.3) 46%,rgba(255,255,255,.12) 52%,rgba(255,255,255,.25))"></div>
<div class="tb" style="left:485px;width:106px"></div>
<div class="tb" style="left:634px;width:213px"></div>
<div class="a" style="left:741px;top:694px;width:1px;height:22px;background:rgba(60,75,95,.45)"></div>
<div class="tb" style="left:851px;width:106px"></div>
<div class="tt" style="left:212px;font-size:12.5px;top:697px">Adobe Ph...</div>
<div class="tt" style="left:321px;top:697px">海报.ai @ ...</div>
<div class="tt" style="left:511px">新标签页</div>
<div class="tt" style="left:662px">基础知识</div>
<div class="tt" style="left:769px">新建文件夹</div>
<div class="tt" style="left:879px">陈兰等7个...</div>
<div class="tt" style="left:970px;top:696px;font-family:'Liberation Mono',monospace;font-size:12px;text-shadow:none;letter-spacing:-0.3px">CH</div>
<div class="tt" style="left:1222px;top:697px;font-size:13px;text-shadow:none">11:15</div>
<div class="a" style="left:1265px;top:691px;width:15px;height:29px;border-left:1px solid #56657a;background:linear-gradient(90deg,rgba(255,255,255,.55),rgba(255,255,255,.15) 25%,rgba(255,255,255,.05) 70%,rgba(0,0,0,.1)),linear-gradient(#c2cedc,#9aabbf 45%,#8495ab 52%,#98a9bd)"></div>
<svg style="left:0;top:686px" width="1280" height="34" viewBox="0 686 1280 34">
<defs>
<radialGradient id="orb" cx=".5" cy=".4" r=".7"><stop offset="0" stop-color="#5ab4ec"/><stop offset=".5" stop-color="#1f73bd"/><stop offset=".85" stop-color="#0f4384"/><stop offset="1" stop-color="#0a2b5a"/></radialGradient>
<linearGradient id="fold" x1="0" x2="1"><stop offset="0" stop-color="#fff3a8"/><stop offset=".5" stop-color="#f3d04f"/><stop offset="1" stop-color="#d9a520"/></linearGradient>
</defs>
<!-- start orb -->
<circle cx="27" cy="706" r="17.500" fill="#20466f" opacity=".5"/>
<circle cx="27" cy="706" r="16.500" fill="url(#orb)" stroke="#7fb4dc" stroke-width=".8"/>
<path d="M11.500 703a15.500 15.500 0 0 1 31 0c-5 3.500-10 3-15.500 1.500s-10.500-2-15.500-1.500z" fill="#fff" opacity=".22"/>
<g transform="translate(27.500 705) scale(1.120)"><path d="M-8.500-7c2.500-1.500 5-1.500 7.500-.3l-1.600 6.300c-2.400-1.200-4.900-1.200-7.400.3z" fill="#f0542a"/><path d="M.5-6.800c2.500 1.200 5 1.200 7.500-.3L6.400-.8c-2.500 1.500-5 1.500-7.500.3z" fill="#9bd04a"/><path d="M-10.400.8c2.500-1.500 5-1.500 7.400-.3L-4.600 6.800c-2.400-1.200-4.900-1.200-7.400.3z" fill="#4aa8ee"/><path d="M-1.500 1c2.500 1.200 5 1.200 7.500-.3L4.400 7c-2.500 1.500-5 1.500-7.500.3z" fill="#fbc72a"/></g>
<!-- quick icons -->
<rect x="71" y="697" width="16" height="16" rx="2.500" fill="#2b7fd0"/><circle cx="79" cy="704.500" r="2.300" fill="#fff"/><path d="M73.500 699.500c0 6 2 9.500 5.500 9.500s5.500-3.500 5.500-9.500" fill="none" stroke="#fff" stroke-width="1.800"/>
<rect x="113" y="697" width="16" height="16" rx="2" fill="#3b93dc"/><path d="M116.500 707.500a2.500 2.500 0 0 1 1-4.800 3.500 3.500 0 0 1 6.800.6 2.200 2.200 0 0 1-.3 4.200z" fill="none" stroke="#fff" stroke-width="1.300"/><path d="M115 711h12" stroke="#cfe6fa" stroke-width="1"/>
<circle cx="162" cy="705" r="7" fill="#2a9fe0" stroke="#e8f4fc" stroke-width="1.200"/><path d="M159.800 701.500v7M164.300 701.700l-3.800 3.400 4 3.600" fill="none" stroke="#fff" stroke-width="1.600"/>
<!-- Ps -->
<rect x="193" y="698" width="15" height="15" fill="#1c1f7a" stroke="#0b0d40" stroke-width="1"/><text x="200.500" y="709.500" font-family="Liberation Sans,sans-serif" font-size="9.500" font-weight="bold" text-anchor="middle" fill="#9fc4ff">Ps</text>
<!-- Ai -->
<rect x="302" y="698" width="16" height="15" fill="#3a1e04" stroke="#c07a18" stroke-width="1.200"/><text x="310" y="709.500" font-family="Liberation Sans,sans-serif" font-size="10" font-weight="bold" text-anchor="middle" fill="#f5a324">Ai</text>
<!-- calculator -->
<rect x="415.500" y="697.500" width="12" height="15" rx="1" fill="#dbe9f6" stroke="#8aa4c0"/><rect x="417" y="699" width="9" height="3.500" fill="#6fa3d8"/><g fill="#7b9fc4"><rect x="417" y="704" width="2" height="2"/><rect x="420.500" y="704" width="2" height="2"/><rect x="424" y="704" width="2" height="2"/><rect x="417" y="707" width="2" height="2"/><rect x="420.500" y="707" width="2" height="2"/><rect x="424" y="707" width="2" height="2"/><rect x="417" y="710" width="2" height="2"/><rect x="420.500" y="710" width="2" height="2"/></g><rect x="424" y="710" width="2" height="2" fill="#f0b040"/>
<!-- film -->
<rect x="454" y="697" width="16" height="16" fill="#1f56b4"/><g fill="#fff"><rect x="455" y="699" width="3" height="2.500"/><rect x="455" y="703.500" width="3" height="2.500"/><rect x="455" y="708" width="3" height="2.500"/><rect x="460" y="699" width="9" height="4"/><rect x="460" y="704.500" width="9" height="4"/></g><rect x="460" y="710" width="9" height="2" fill="#9dc0f0"/>
<!-- QQ browser -->
<circle cx="500" cy="705" r="7" fill="none" stroke="#2a8be6" stroke-width="3.200"/><path d="M503 709l5 3.500" stroke="#2a8be6" stroke-width="3"/><path d="M497 711a3 3 0 0 1 1-5 3.500 3.500 0 0 1 6.500 0 2.600 2.600 0 0 1 1 5z" fill="#fff"/>
<!-- bird -->
<rect x="603" y="696" width="18" height="18" rx="2" fill="#e9f1fa"/><path d="M605 699c3 1 5 3 7 6l7-6c0 5-2 9-6 11l-2 3-1-3c-3-2-5-6-5-11z" fill="#1f72cf"/>
<!-- folders -->
<g><path d="M643 698h5l1.500 1.500h3.500v13h-10z" fill="#e8b93a"/><path d="M646 697.500l6-1v15.500l-6 1z" fill="url(#fold)" stroke="#c99a20" stroke-width=".5"/><path d="M650 698l5.500-1v15l-5.500 1.200z" fill="#fbe98c" stroke="#d2a62b" stroke-width=".5"/></g>
<g transform="translate(107 0)"><path d="M643 698h5l1.500 1.500h3.500v13h-10z" fill="#e8b93a"/><path d="M646 697.500l6-1v15.500l-6 1z" fill="url(#fold)" stroke="#c99a20" stroke-width=".5"/><path d="M650 698l5.500-1v15l-5.500 1.200z" fill="#fbe98c" stroke="#d2a62b" stroke-width=".5"/></g>
<!-- photo -->
<rect x="858" y="697" width="16" height="16" fill="#7b8f4e"/><path d="M858 697h16v6l-5-2-5 3-6-2z" fill="#b8b07a"/><circle cx="865" cy="705" r="3.500" fill="#e6c79a"/><path d="M858 713v-4l5-1 4 2 7-3v6z" fill="#c06a48"/>
<!-- tray: sogou -->
<rect x="991.500" y="695.500" width="16" height="15" rx="1.500" fill="#fff" stroke="#e2572b" stroke-width="1.600"/><text x="999.500" y="708" font-family="Liberation Sans,sans-serif" font-size="13" font-weight="bold" text-anchor="middle" fill="#e2572b">S</text>
<!-- wechat -->
<ellipse cx="1027" cy="704.500" rx="8.200" ry="6.800" fill="#6cc22b"/><path d="M1021.500 709.500l-1.500 3.500 4.500-2z" fill="#6cc22b"/><circle cx="1024" cy="702.500" r="1" fill="#3f8a12"/><circle cx="1030" cy="702.500" r="1" fill="#3f8a12"/><ellipse cx="1025" cy="700.500" rx="5" ry="2" fill="#a6e36f" opacity=".6"/>
<!-- qq -->
<ellipse cx="1050" cy="706" rx="6" ry="6.500" fill="#2a2a2a"/><circle cx="1050" cy="700.500" r="4" fill="#2a2a2a"/><ellipse cx="1050" cy="708" rx="3.500" ry="4" fill="#fff"/><path d="M1045.500 704c3 1.500 6 1.500 9 0l.5 2c-3 1.500-7 1.500-10 0z" fill="#e8333a"/><ellipse cx="1050" cy="702.800" rx="2.300" ry="1" fill="#f6a821"/><path d="M1045 711.500h4.500v1.500h-5zM1050.500 711.500h4.500l.5 1.500h-5z" fill="#f6a821"/><circle cx="1055.500" cy="709.500" r="3.800" fill="#f59f1b" stroke="#fff" stroke-width=".6"/><path d="M1053.500 708.500h4M1053.500 710.500h4" stroke="#fff" stroke-width="1"/><path d="M1046 708l-2.500 3" stroke="#c22ca0" stroke-width="1.600"/>
<!-- speaker -->
<path d="M1067 702h3l4-4v14l-4-4h-3z" fill="#f4f4f4" stroke="#8a96a4" stroke-width=".6"/><path d="M1076.500 701.500c1.500 2 1.500 5 0 7M1079 699.500c2.500 3 2.500 8 0 11" fill="none" stroke="#f4f4f4" stroke-width="1.300"/>
<!-- 360 plus -->
<circle cx="1098.500" cy="705.500" r="8" fill="#f2e52a" stroke="#8cb81c" stroke-width="1.400"/><path d="M1091 703c2-5 9-7 14-2" fill="none" stroke="#4fa81e" stroke-width="2"/><path d="M1098.500 700.500v10M1093.500 705.500h10" stroke="#1e7a1a" stroke-width="2.600"/>
<!-- network -->
<rect x="1119.500" y="700.500" width="11" height="9" fill="#dfe9f4" stroke="#2a3440" stroke-width="1.200"/><path d="M1121 712.500h9M1125 710v2.500" stroke="#2a3440" stroke-width="1.400"/><path d="M1116.500 697v5M1114.500 697.500v3.500h4v-3.500M1116.500 702v6h3" fill="none" stroke="#fff" stroke-width="1.400"/>
<!-- flag -->
<path d="M1140.500 697v16" stroke="#f4f4f4" stroke-width="1.600"/><path d="M1141.500 698c3-1.500 5 1.500 9 0v7c-4 1.500-6-1.500-9 0z" fill="#f4f4f4" stroke="#8a96a4" stroke-width=".5"/><circle cx="1150.500" cy="709" r="4.300" fill="#d8272d" stroke="#fff" stroke-width=".7"/><path d="M1148.700 707.200l3.600 3.600M1152.300 707.200l-3.600 3.600" stroke="#fff" stroke-width="1.300"/>
<!-- keyboard/mouse -->
<rect x="1161.500" y="698.500" width="16" height="8" rx="1" fill="#1d6e78" stroke="#0e3f46"/><path d="M1163 700.500h13M1163 702.500h13M1163 704.500h13" stroke="#7fd0d4" stroke-width=".8" stroke-dasharray="1.500 1"/><rect x="1172" y="702.500" width="7" height="11" rx="3.500" fill="#f0f0f0" stroke="#7a8694" stroke-width=".8"/><path d="M1175.500 703v4" stroke="#7a8694" stroke-width=".8"/>
<!-- adobe -->
<rect x="1187.500" y="697.500" width="15" height="14" fill="#b11a1a" stroke="#7c0e0e"/><path d="M1195 700l4 9h-2l-.8-2h-2.400l1.200-2.500.9 0-.9-2.200-2.800 6.700h-2.200z" fill="#fff"/>
</svg>
</body>
</html>
